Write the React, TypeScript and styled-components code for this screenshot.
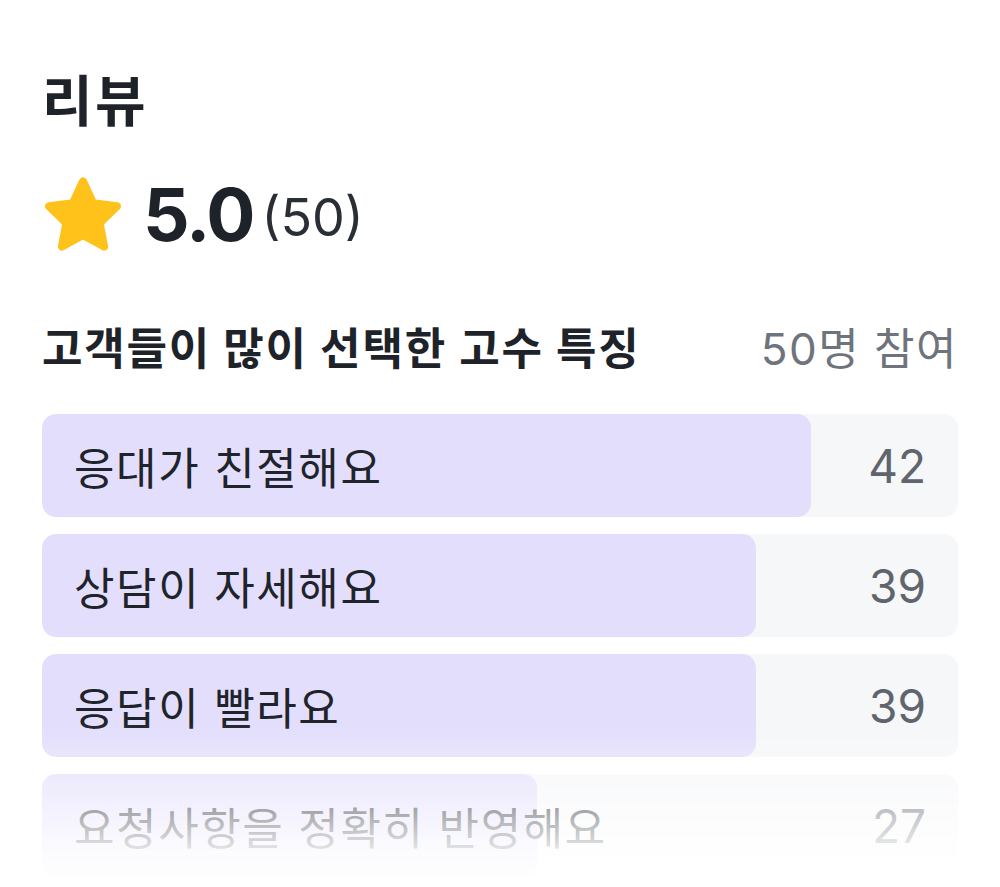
import styled, { createGlobalStyle } from "styled-components";

type Trait = {
  label: string;
  count: number;
};

const TOTAL = 50;

const traits: Trait[] = [
  { label: "응대가 친절해요", count: 42 },
  { label: "상담이 자세해요", count: 39 },
  { label: "응답이 빨라요", count: 39 },
  { label: "요청사항을 정확히 반영해요", count: 27 },
];

const GlobalStyle = createGlobalStyle`
  html, body {
    margin: 0;
    padding: 0;
    background: #ffffff;
    overflow: hidden;
  }
  body {
    font-family: "Inter", "Noto Sans CJK KR", sans-serif;
    color: #1e2229;
  }
`;

const Page = styled.main`
  padding: 66px 42px 0 42px;
  height: 887px;
  box-sizing: border-box;
`;

const Title = styled.h1`
  margin: 0;
  font-size: 55px;
  line-height: 70px;
  font-weight: 700;
  letter-spacing: 2.5px;
`;

const RatingRow = styled.div`
  display: flex;
  align-items: center;
  margin-top: 38px;
  height: 80px;
`;

const Star = styled.svg`
  width: 78px;
  height: 74px;
  margin-left: 2px;
  flex-shrink: 0;
`;

const Score = styled.span`
  margin-left: 21px;
  font-size: 73px;
  font-weight: 700;
  letter-spacing: -2px;
`;

const Count = styled.span`
  margin-left: 8px;
  margin-top: 6px;
  font-size: 52px;
  font-weight: 400;
  color: #2a2e35;
`;

const SectionHeader = styled.div`
  display: flex;
  justify-content: space-between;
  align-items: center;
  margin-top: 62px;
  height: 60px;
`;

const SectionTitle = styled.h2`
  margin: 0;
  font-size: 44px;
  font-weight: 700;
  letter-spacing: 1.8px;
`;

const Participants = styled.span`
  font-size: 44px;
  font-weight: 400;
  color: #6e737c;
  letter-spacing: 1.5px;
`;

const List = styled.ul`
  list-style: none;
  margin: 38px 0 0 0;
  padding: 0;
  display: flex;
  flex-direction: column;
  gap: 17px;
`;

const Bar = styled.li`
  position: relative;
  display: flex;
  align-items: center;
  justify-content: space-between;
  height: 103px;
  padding: 0 32px;
  border-radius: 14px;
  background: #f6f7f9;
  overflow: hidden;
`;

const Fill = styled.div`
  position: absolute;
  left: 0;
  top: 0;
  bottom: 0;
  border-radius: 14px;
  background: #e2defc;
`;

const Label = styled.span`
  position: relative;
  font-size: 44px;
  font-weight: 400;
  color: #1f232a;
  letter-spacing: 1.6px;
`;

const Value = styled.span`
  position: relative;
  font-size: 46px;
  font-weight: 400;
  color: #5f646d;
`;

const Fade = styled.div`
  position: fixed;
  left: 0;
  right: 0;
  bottom: 0;
  height: 165px;
  background: linear-gradient(
    to bottom,
    rgba(255, 255, 255, 0) 0%,
    rgba(255, 255, 255, 0.5) 45%,
    rgba(255, 255, 255, 0.85) 75%,
    #ffffff 100%
  );
  pointer-events: none;
`;

export default function App() {
  return (
    <>
      <GlobalStyle />
      <Page>
        <Title>리뷰</Title>
        <RatingRow>
          <Star viewBox="1.8 1.4 20.4 19.9">
            <path
              d="M12 2.6l2.75 5.9 6.35.8-4.65 4.45 1.2 6.35L12 17l-5.65 3.1 1.2-6.35L2.9 9.3l6.35-.8z"
              fill="#FFC21A"
              stroke="#FFC21A"
              strokeWidth="2.2"
              strokeLinejoin="round"
            />
          </Star>
          <Score>5.0</Score>
          <Count>(50)</Count>
        </RatingRow>

        <SectionHeader>
          <SectionTitle>고객들이 많이 선택한 고수 특징</SectionTitle>
          <Participants>50명 참여</Participants>
        </SectionHeader>

        <List>
          {traits.map((t) => (
            <Bar key={t.label}>
              <Fill style={{ width: `${(t.count / TOTAL) * 100}%` }} />
              <Label>{t.label}</Label>
              <Value>{t.count}</Value>
            </Bar>
          ))}
        </List>
      </Page>
      <Fade />
    </>
  );
}
